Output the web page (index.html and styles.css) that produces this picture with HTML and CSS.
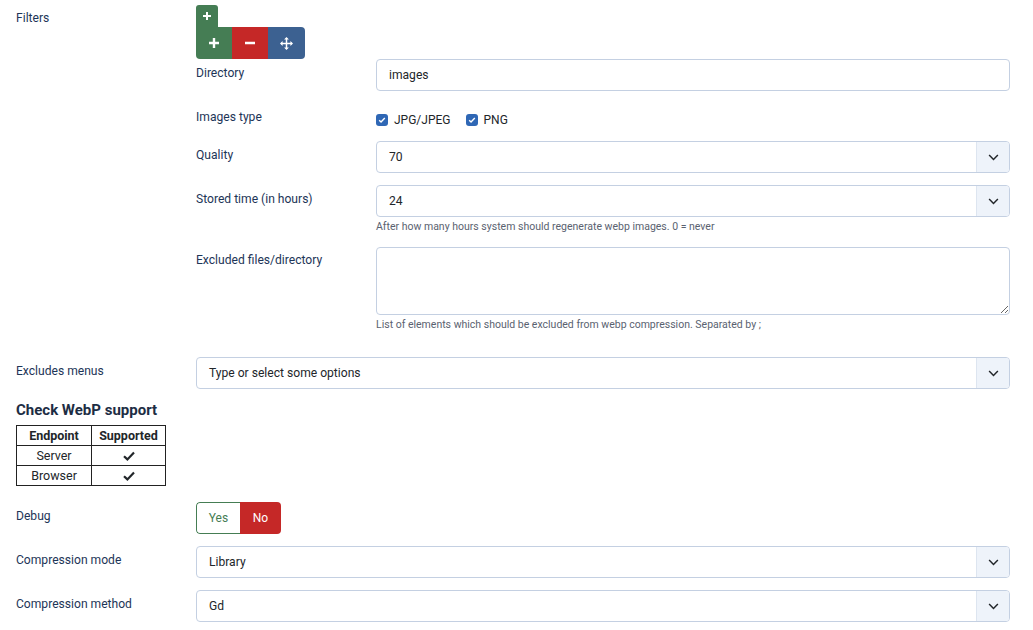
FILE: index.html
```html
<!DOCTYPE html>
<html lang="en">
<head>
<meta charset="utf-8">
<title>WebP settings</title>
<link rel="stylesheet" href="styles.css">
</head>
<body>
<div class="page">
  <div class="row row-filters">
    <div class="label">Filters</div>
    <div class="control">
      <button class="btn btn-add-small" type="button"><svg viewBox="0 0 10 10" width="10" height="10"><path d="M5 1v8M1 5h8" stroke="#fff" stroke-width="2"/></svg></button>
      <div class="btn-group">
        <button class="btn btn-green" type="button"><svg viewBox="0 0 12 12" width="12" height="12"><path d="M6 1v10M1 6h10" stroke="#fff" stroke-width="2.4"/></svg></button>
        <button class="btn btn-red" type="button"><svg viewBox="0 0 12 12" width="12" height="12"><path d="M1 6h10" stroke="#fff" stroke-width="2.4"/></svg></button>
        <button class="btn btn-blue" type="button"><svg viewBox="0 0 14 14" width="13" height="13"><path d="M7 1v12M1 7h12" stroke="#fff" stroke-width="1.6"/><path d="M7 0l2.6 2.8H4.4zM7 14l2.6-2.8H4.4zM0 7l2.8-2.6v5.2zM14 7l-2.8-2.6v5.2z" fill="#fff"/></svg></button>
      </div>
      <div class="subform">
        <div class="row">
          <div class="label sub-label">Directory</div>
          <div class="control"><input class="input" type="text" value="images"></div>
        </div>
        <div class="row">
          <div class="label sub-label">Images type</div>
          <div class="control checks">
            <label class="check"><span class="box"><svg viewBox="0 0 10 10" width="8" height="8"><path d="M1.5 5.2l2.3 2.2 4.7-4.8" stroke="#fff" stroke-width="1.8" fill="none"/></svg></span>JPG/JPEG</label>
            <label class="check"><span class="box"><svg viewBox="0 0 10 10" width="8" height="8"><path d="M1.5 5.2l2.3 2.2 4.7-4.8" stroke="#fff" stroke-width="1.8" fill="none"/></svg></span>PNG</label>
          </div>
        </div>
        <div class="row">
          <div class="label sub-label">Quality</div>
          <div class="control">
            <div class="select"><span class="value">70</span><span class="caret"><svg viewBox="0 0 12 8" width="11" height="7"><path d="M1 1.2l5 5 5-5" stroke="#22262a" stroke-width="1.7" fill="none"/></svg></span></div>
          </div>
        </div>
        <div class="row">
          <div class="label sub-label">Stored time (in hours)</div>
          <div class="control">
            <div class="select"><span class="value">24</span><span class="caret"><svg viewBox="0 0 12 8" width="11" height="7"><path d="M1 1.2l5 5 5-5" stroke="#22262a" stroke-width="1.7" fill="none"/></svg></span></div>
            <div class="help">After how many hours system should regenerate webp images. 0 = never</div>
          </div>
        </div>
        <div class="row">
          <div class="label sub-label">Excluded files/directory</div>
          <div class="control">
            <textarea class="textarea"></textarea>
            <div class="help">List of elements which should be excluded from webp compression. Separated by ;</div>
          </div>
        </div>
      </div>
    </div>
  </div>

  <div class="row">
    <div class="label">Excludes menus</div>
    <div class="control">
      <div class="select"><span class="value">Type or select some options</span><span class="caret"><svg viewBox="0 0 12 8" width="11" height="7"><path d="M1 1.2l5 5 5-5" stroke="#22262a" stroke-width="1.7" fill="none"/></svg></span></div>
    </div>
  </div>

  <h3 class="heading">Check WebP support</h3>
  <table class="support">
    <tr><th>Endpoint</th><th>Supported</th></tr>
    <tr><td>Server</td><td><svg viewBox="0 0 12 10" width="12" height="10"><path d="M1 5.2l3.4 3.2L11 1.6" stroke="#22262a" stroke-width="2.2" fill="none"/></svg></td></tr>
    <tr><td>Browser</td><td><svg viewBox="0 0 12 10" width="12" height="10"><path d="M1 5.2l3.4 3.2L11 1.6" stroke="#22262a" stroke-width="2.2" fill="none"/></svg></td></tr>
  </table>

  <div class="row row-debug">
    <div class="label">Debug</div>
    <div class="control">
      <div class="switcher"><span class="sw-yes">Yes</span><span class="sw-no">No</span></div>
    </div>
  </div>

  <div class="row">
    <div class="label">Compression mode</div>
    <div class="control">
      <div class="select"><span class="value">Library</span><span class="caret"><svg viewBox="0 0 12 8" width="11" height="7"><path d="M1 1.2l5 5 5-5" stroke="#22262a" stroke-width="1.7" fill="none"/></svg></span></div>
    </div>
  </div>

  <div class="row">
    <div class="label">Compression method</div>
    <div class="control">
      <div class="select"><span class="value">Gd</span><span class="caret"><svg viewBox="0 0 12 8" width="11" height="7"><path d="M1 1.2l5 5 5-5" stroke="#22262a" stroke-width="1.7" fill="none"/></svg></span></div>
    </div>
  </div>
</div>
</body>
</html>
```

FILE: styles.css
```css
* { box-sizing: border-box; }
html, body { margin: 0; background: #fff; }
body {
  font-family: Roboto, "Noto Sans", "Liberation Sans", sans-serif;
  font-size: 12px;
  color: #22262a;
}
.page {
  padding: 5px 23px 0 16px;
}
.row {
  display: grid;
  grid-template-columns: 180px 1fr;
  margin-bottom: 12px;
}
.label {
  padding-top: 5px;
  line-height: 18px;
  color: #1d3557;
  font-size: 12.1px;
}
.control { min-width: 0; }
.row-filters { margin-bottom: 0; }
.row-filters > .label { padding-top: 4px; }

.btn {
  border: 0;
  padding: 0;
  margin: 0;
  display: flex;
  align-items: center;
  justify-content: center;
  cursor: pointer;
}
.btn-add-small {
  width: 22px;
  height: 22px;
  background: #457d54;
  border-radius: 3px 3px 0 0;
}
.btn-group {
  display: flex;
  width: 109px;
  height: 32px;
  border-radius: 0 4px 4px 4px;
  overflow: hidden;
}
.btn-green { width: 36px; background: #457d54; }
.btn-red { width: 36px; background: #c52827; }
.btn-blue { width: 37px; background: #3c6191; }

.subform { margin-bottom: 25px; }
.subform .row:last-child { margin-bottom: 0; }
.sub-label { padding-top: 5px; }

.input, .select, .textarea {
  width: 100%;
  height: 32px;
  border: 1px solid #c4d0e2;
  border-radius: 4px;
  background: #fff;
  font-family: inherit;
  font-size: 12.1px;
  color: #22262a;
}
.input { padding: 0 12px; outline: none; }
.select {
  display: flex;
  align-items: center;
  overflow: hidden;
}
.select .value { flex: 1; padding-left: 12px; }
.select .caret {
  width: 33px;
  height: 100%;
  background: #eef3fa;
  border-left: 1px solid #dde5f0;
  display: flex;
  align-items: center;
  justify-content: center;
}
.textarea {
  display: block;
  height: 68px;
  margin-top: 1px;
  resize: vertical;
  outline: none;
}
.help {
  font-size: 10.5px;
  color: #5a6270;
  line-height: 14px;
  margin-top: 3px;
}

.checks {
  display: flex;
  gap: 15px;
  padding-top: 8px;
  height: 26px;
}
.check {
  display: flex;
  align-items: center;
  gap: 6px;
  line-height: 18px;
}
.box {
  width: 12px;
  height: 12px;
  background: #2f67b5;
  border-radius: 3px;
  display: flex;
  align-items: center;
  justify-content: center;
}

.heading {
  margin: 0 0 6px;
  font-size: 15px;
  font-weight: 700;
  line-height: 18px;
  color: #1d2d44;
}
.support {
  border-collapse: collapse;
  width: 150px;
  margin-bottom: 16px;
  font-size: 12.5px;
}
.support th, .support td {
  border: 1px solid #222;
  text-align: center;
  height: 20px;
  padding: 0;
  line-height: 18px;
}
.support th:first-child, .support td:first-child { width: 75px; }
.support th { font-weight: 700; }
.support svg { vertical-align: middle; }

.switcher {
  display: inline-flex;
  height: 32px;
  border-radius: 4px;
  overflow: hidden;
}
.sw-yes {
  width: 44px;
  border: 1px solid #457d54;
  border-right: 0;
  border-radius: 4px 0 0 4px;
  color: #457d54;
  display: flex;
  align-items: center;
  justify-content: center;
}
.sw-no {
  width: 41px;
  background: #c52827;
  color: #fff;
  display: flex;
  align-items: center;
  justify-content: center;
}
```
